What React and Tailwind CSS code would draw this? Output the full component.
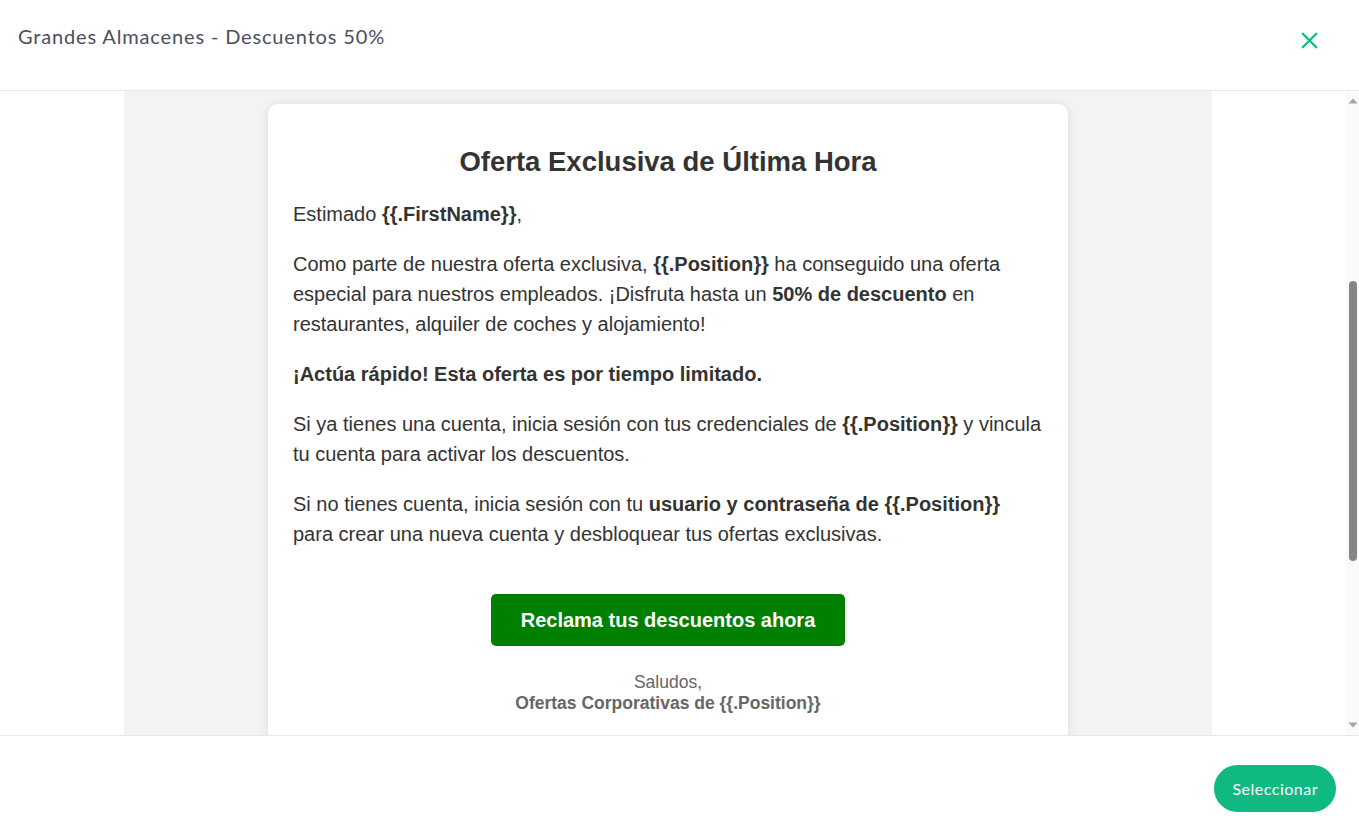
import { useLayoutEffect, useRef } from "react";
import { X } from "lucide-react";

function FakeScrollbar() {
  return (
    <div className="w-[13px] shrink-0 bg-[#fafafa] flex flex-col items-center py-[7px]">
      <svg width="10" height="6" viewBox="0 0 10 6" className="shrink-0">
        <path d="M5 0.5 L9.5 5.5 L0.5 5.5 Z" fill="#a3a3a3" />
      </svg>
      <div className="flex-1 w-full flex flex-col items-center">
        <div className="h-[177px] shrink-0" />
        <div className="w-[8px] h-[280px] rounded-[4px] bg-[#858585]" />
      </div>
      <svg width="10" height="6" viewBox="0 0 10 6" className="shrink-0">
        <path d="M0.5 0.5 L9.5 0.5 L5 5.5 Z" fill="#a3a3a3" />
      </svg>
    </div>
  );
}

export default function App() {
  const scrollRef = useRef(null);

  useLayoutEffect(() => {
    if (scrollRef.current) scrollRef.current.scrollTop = 413;
  }, []);

  return (
    <div className="w-[1359px] h-[825px] flex flex-col bg-white overflow-hidden">
      {/* header */}
      <div className="h-[91px] shrink-0 flex items-start justify-between border-b border-[#e8e8e8] pl-[18px]">
        <h1 className="mt-[23px] text-[20px] leading-[26px] text-[#4a5060] font-[family-name:Lato,sans-serif] tracking-[0.85px]">
          Grandes Almacenes - Descuentos 50%
        </h1>
        <button className="mt-[27px] mr-[36px] text-[#10b981]">
          <X className="w-[27px] h-[27px]" strokeWidth={2} />
        </button>
      </div>

      {/* body */}
      <div className="flex-1 min-h-0 flex">
        <div ref={scrollRef} className="flex-1 overflow-y-scroll [scrollbar-width:none]">
          <div className="ml-[124px] w-[1088px] bg-[#f3f3f3] pt-[426px] pb-[60px] font-[family-name:'Liberation_Sans',Arial,sans-serif]">
            <div className="mx-auto w-[800px] bg-white rounded-[10px] shadow-[0_0_10px_rgba(0,0,0,0.1)] px-[25px] pt-[44px] pb-[140px] text-[#333]">
              <h2 className="text-center text-[27.5px] font-bold leading-[28px]">
                Oferta Exclusiva de Última Hora
              </h2>
              <div className="mt-[23px] text-[20px] leading-[30px] flex flex-col gap-[20px]">
                <p>
                  Estimado <b>{"{{.FirstName}}"}</b>,
                </p>
                <p>
                  Como parte de nuestra oferta exclusiva, <b>{"{{.Position}}"}</b> ha conseguido una oferta especial para nuestros empleados. ¡Disfruta hasta un <b>50% de descuento</b> en restaurantes, alquiler de coches y alojamiento!
                </p>
                <p>
                  <b>¡Actúa rápido! Esta oferta es por tiempo limitado.</b>
                </p>
                <p>
                  Si ya tienes una cuenta, inicia sesión con tus credenciales de <b>{"{{.Position}}"}</b> y vincula tu cuenta para activar los descuentos.
                </p>
                <p>
                  Si no tienes cuenta, inicia sesión con tu <b>usuario y contraseña de {"{{.Position}}"}</b> para crear una nueva cuenta y desbloquear tus ofertas exclusivas.
                </p>
              </div>
              <div className="mt-[45px] flex justify-center">
                <a className="h-[52px] px-[30px] flex items-center bg-[#008000] text-white text-[20px] font-bold rounded-[5px]">
                  Reclama tus descuentos ahora
                </a>
              </div>
              <div className="mt-[26px] text-center text-[17.5px] leading-[21px] text-[#666]">
                <p>Saludos,</p>
                <p className="font-bold">Ofertas Corporativas de {"{{.Position}}"}</p>
              </div>
            </div>
          </div>
        </div>
        <FakeScrollbar />
      </div>

      {/* footer */}
      <div className="h-[90px] shrink-0 border-t border-[#e8e8e8] flex items-start justify-end pr-[23px]">
        <button className="mt-[29px] h-[47px] px-[18px] rounded-full bg-[#10b981] text-white text-[16px] tracking-[0.5px] whitespace-nowrap font-[family-name:Lato,sans-serif]">
          Seleccionar
        </button>
      </div>
    </div>
  );
}
